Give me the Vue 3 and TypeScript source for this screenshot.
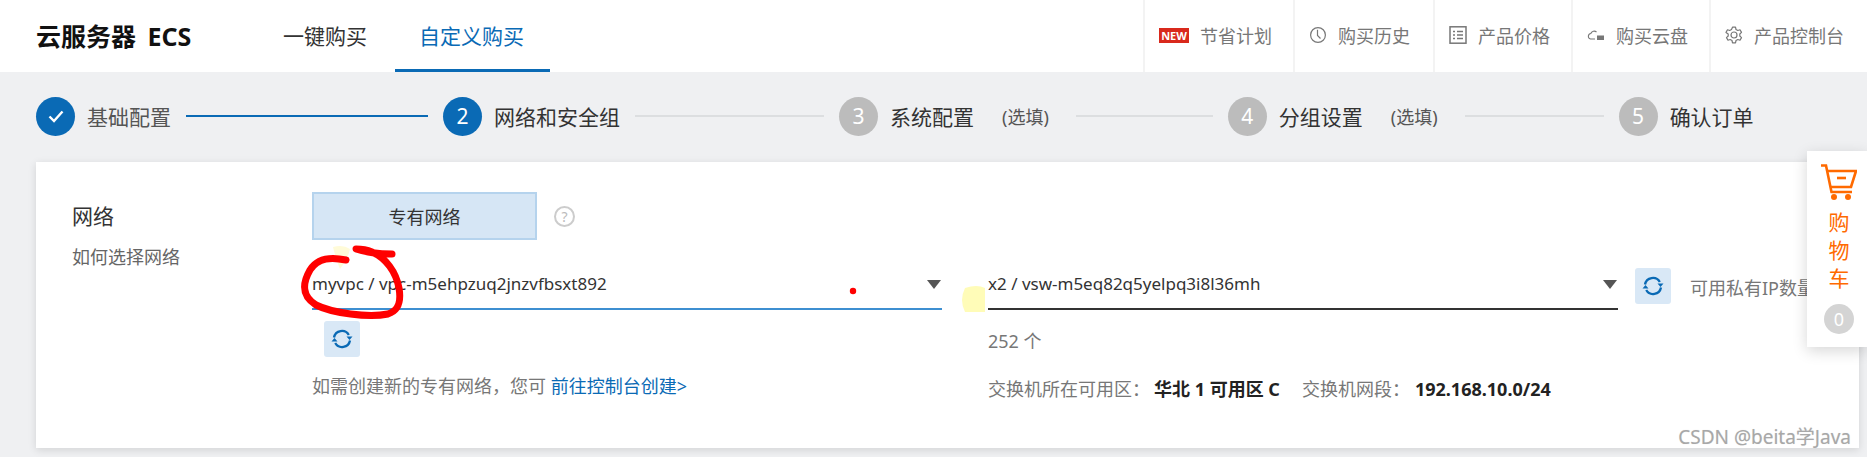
<script setup lang="ts">
const navItems = [
  { key: 'plan', text: '节省计划', width: 150 },
  { key: 'history', text: '购买历史', width: 140 },
  { key: 'price', text: '产品价格', width: 138 },
  { key: 'disk', text: '购买云盘', width: 138 },
  { key: 'console', text: '产品控制台', width: 158 },
]

const steps = [
  { no: 2, label: '网络和安全组', state: 'active', optional: false, line: 189 },
  { no: 3, label: '系统配置', state: 'todo', optional: true, line: 137 },
  { no: 4, label: '分组设置', state: 'todo', optional: true, line: 139 },
  { no: 5, label: '确认订单', state: 'todo', optional: false, line: 0 },
]
</script>

<template>
  <div class="page">
    <header class="topbar">
      <div class="logo">云服务器 ECS</div>
      <nav class="tabs">
        <a class="tab">一键购买</a>
        <a class="tab active">自定义购买</a>
      </nav>
      <div class="links">
        <div v-for="item in navItems" :key="item.key" class="link" :style="{ width: item.width + 'px' }">
          <span v-if="item.key === 'plan'" class="new-tag">NEW</span>
          <svg v-else-if="item.key === 'history'" class="link-icon" viewBox="0 0 18 18" fill="none" stroke="#777" stroke-width="1.2">
            <circle cx="9" cy="9" r="7.4" />
            <path d="M8.5 3.800V9.500L11.500 12.500" />
          </svg>
          <svg v-else-if="item.key === 'price'" class="link-icon" viewBox="0 0 18 18" fill="none" stroke="#777" stroke-width="1.5">
            <rect x="1" y="0.800" width="16" height="16.400" />
            <path d="M4 5.500h2M8 5.500h6M4 9h2M8 9h6M4 12.500h2M8 12.500h6" />
          </svg>
          <svg v-else-if="item.key === 'disk'" class="link-icon" viewBox="0 0 18 18" fill="none" stroke="#777" stroke-width="1.100">
            <path d="M9.500 6A3.600 3.600 0 0 0 3.800 7.500 2.800 2.800 0 0 0 3.500 13H8" />
            <rect x="10" y="9.500" width="7" height="4.500" fill="#777" stroke="none" />
          </svg>
          <svg v-else class="link-icon" viewBox="0 0 18 18" fill="none" stroke="#777" stroke-width="1.200">
            <path d="M7.500 1.200h3l.5 2.300 1.800 1 2.200-.7 1.500 2.600-1.700 1.600v2l1.700 1.600-1.500 2.600-2.200-.7-1.800 1-.5 2.300h-3l-.5-2.300-1.800-1-2.200.7-1.500-2.600 1.700-1.600v-2L1 6.400l1.500-2.600 2.200.7 1.800-1z" stroke-linejoin="round" />
            <circle cx="9" cy="9" r="3" />
          </svg>
          <span>{{ item.text }}</span>
        </div>
      </div>
    </header>

    <div class="steps">
      <div class="step">
        <span class="dot done">
          <svg viewBox="0 0 16 16" width="16" height="16" fill="none" stroke="#fff" stroke-width="2.400">
            <path d="M1.500 8.500 6 13 14.500 3.500" />
          </svg>
        </span>
        <span class="step-label done-label">基础配置</span>
      </div>
      <i class="step-line blue" />
      <template v-for="step in steps" :key="step.no">
        <div class="step">
          <span class="dot" :class="step.state">{{ step.no }}</span>
          <span class="step-label">{{ step.label }}</span>
          <span v-if="step.optional" class="optional">(选填)</span>
        </div>
        <i v-if="step.line" class="step-line" :style="{ width: step.line + 'px' }" />
      </template>
    </div>

    <section class="card">
      <div class="label-col">
        <div class="label">网络</div>
        <div class="sub-label">如何选择网络</div>
      </div>
      <div class="main-col">
        <div class="type-row">
          <button class="type-btn">专有网络</button>
          <span class="help">?</span>
        </div>
        <div class="net-row">
          <div class="net-col">
            <div class="select focus">
              <span>myvpc / vpc-m5ehpzuq2jnzvfbsxt892</span>
              <i class="arrow" />
            </div>
            <button class="refresh left">
              <svg viewBox="0 0 22 22" width="22" height="22" fill="none" stroke="#0a6ab5" stroke-width="2.300">
                <path d="M3 9.500A8 8 0 0 1 17.800 7" />
                <path d="M19 12.500A8 8 0 0 1 4.200 15" />
                <path d="M15.500 8.500h6l-3 3.500zM.5 13.500h6l-3-3.500z" fill="#0a6ab5" stroke="none" />
              </svg>
            </button>
            <p class="hint">如需创建新的专有网络，您可 <a class="console-link">前往控制台创建&gt;</a></p>
          </div>
          <div class="net-col">
            <div class="switch-row">
              <div class="select">
                <span>x2 / vsw-m5eq82q5yelpq3i8l36mh</span>
                <i class="arrow" />
              </div>
              <button class="refresh">
                <svg viewBox="0 0 22 22" width="22" height="22" fill="none" stroke="#0a6ab5" stroke-width="2.300">
                  <path d="M3 9.500A8 8 0 0 1 17.800 7" />
                  <path d="M19 12.500A8 8 0 0 1 4.200 15" />
                  <path d="M15.500 8.500h6l-3 3.500zM.5 13.500h6l-3-3.500z" fill="#0a6ab5" stroke="none" />
                </svg>
              </button>
              <span class="quota">可用私有IP数量</span>
            </div>
            <div class="count">252 个</div>
            <div class="info">
              <span>交换机所在可用区：</span><b>华北 1 可用区 C</b>
              <span class="info-gap">交换机网段：</span><b class="cidr">192.168.10.0/24</b>
            </div>
          </div>
        </div>
      </div>
    </section>

    <aside class="cart">
      <svg viewBox="0 0 36 36" width="36" height="36" fill="none" stroke="#ff6a00" stroke-width="2.600">
        <path d="M0 1.500h5L10.500 28H31" />
        <path d="M6 7h29l-5 16H9.500" />
        <path d="M16 14h9" />
        <circle cx="13" cy="33" r="3" fill="#ff6a00" stroke="none" />
        <circle cx="27" cy="33" r="3" fill="#ff6a00" stroke="none" />
      </svg>
      <div class="cart-text">购<br />物<br />车</div>
      <span class="cart-count">0</span>
    </aside>

    <!-- hand drawn marks on the screenshot -->
    <svg class="marks" viewBox="0 0 1867 457" width="1867" height="457" fill="none">
      <path d="M333 247q10-3 17 2q-3 12-10 20q-4-10-7-22z" fill="#fffbd8" />
      <path d="M965 288q12-4 20 0v24h-20q-6-12 0-24z" fill="#fffcb8" />
      <circle cx="853" cy="291" r="3.200" fill="#f00" />
      <path d="M346 260C332 257 318 257 310 270C302 284 302 296 316 305C332 313 368 318 388 314C400 310 401 300 399 288C396 272 386 258 372 252C365 249 358 249 356 249C368 253 382 254 392 254" stroke="#f00" stroke-width="7" stroke-linecap="round" stroke-linejoin="round" />
    </svg>
    <div class="watermark">CSDN @beita学Java</div>
  </div>
</template>

<style scoped>
.page {
  position: relative;
  width: 1867px;
  height: 457px;
  overflow: hidden;
  background: #eff0f2;
  color: #333;
  font-family: "Noto Sans", "Noto Sans CJK SC", sans-serif;
  font-size: 18px;
}

.topbar {
  display: flex;
  align-items: stretch;
  height: 72px;
  background: #fff;
}

.logo {
  width: 247px;
  padding-left: 36px;
  box-sizing: border-box;
  font-size: 25px;
  font-weight: 700;
  line-height: 72px;
  word-spacing: 5px;
  color: #111;
}

.tabs {
  display: flex;
}

.tab {
  display: block;
  padding: 0 28px 0 36px;
  font-size: 21px;
  line-height: 72px;
  color: #333;
}

.tab.active {
  padding: 0 26px 0 24px;
  color: #0a6ab5;
  border-bottom: 3px solid #0a6ab5;
}

.links {
  display: flex;
  margin-left: auto;
}

.link {
  display: flex;
  align-items: center;
  gap: 11px;
  box-sizing: border-box;
  padding-left: 14px;
  padding-bottom: 2px;
  border-left: 2px solid #f3f3f3;
  color: #777;
}

.new-tag {
  width: 30px;
  height: 15px;
  background: #d9291c;
  color: #fff;
  font-size: 11px;
  font-weight: 700;
  line-height: 15px;
  text-align: center;
}

.link-icon {
  width: 18px;
  height: 18px;
}

.steps {
  display: flex;
  align-items: center;
  height: 88px;
  padding-left: 36px;
}

.step {
  display: flex;
  align-items: center;
  gap: 12px;
}

.dot {
  display: flex;
  align-items: center;
  justify-content: center;
  width: 39px;
  height: 39px;
  border-radius: 50%;
  color: #fff;
  font-size: 21px;
}

.dot.done,
.dot.active {
  background: #0a6ab5;
}

.dot.todo {
  background: #bcbcbc;
}

.step-label {
  font-size: 21px;
  color: #333;
}

.done-label {
  color: #555;
}

.optional {
  margin: 0 12px 0 16px;
  color: #555;
}

.step-line {
  display: block;
  width: 242px;
  height: 2px;
  margin: 0 15px;
  background: #dcdee0;
}

.step-line.blue {
  background: #0a6ab5;
}

.card {
  display: flex;
  width: 1823px;
  height: 286px;
  margin: 2px 0 0 36px;
  padding-top: 30px;
  box-sizing: border-box;
  background: #fff;
  box-shadow: 0 2px 8px rgba(0, 0, 0, 0.12);
}

.label-col {
  width: 276px;
  padding-left: 36px;
  box-sizing: border-box;
}

.label {
  margin-top: 7px;
  font-size: 21px;
  line-height: 34px;
}

.sub-label {
  margin-top: 9px;
  color: #666;
  line-height: 30px;
}

.type-row {
  display: flex;
  align-items: center;
}

.type-btn {
  width: 225px;
  height: 48px;
  padding: 0;
  border: 2px solid #b5d3ed;
  background: #d6e6f5;
  color: #333;
  font: inherit;
}

.help {
  width: 21px;
  height: 21px;
  margin-left: 17px;
  border: 2px solid #ccc;
  border-radius: 50%;
  box-sizing: border-box;
  color: #bbb;
  font-size: 14px;
  line-height: 17px;
  text-align: center;
}

.net-row {
  display: flex;
  gap: 46px;
  margin-top: 26px;
}

.net-col {
  width: 630px;
}

.switch-row {
  display: flex;
  align-items: flex-start;
  width: 900px;
}

.select {
  display: flex;
  flex: none;
  align-items: center;
  justify-content: space-between;
  width: 630px;
  height: 44px;
  padding: 0 1px 6px 0;
  box-sizing: border-box;
  border-bottom: 2px solid #333;
  color: #333;
  font-size: 17px;
  line-height: 36px;
}

.select.focus {
  border-bottom-color: #3d8fd1;
}

.arrow {
  width: 0;
  height: 0;
  border-style: solid;
  border-width: 9px 7px 0;
  border-color: #555 transparent transparent;
}

.refresh {
  display: flex;
  align-items: center;
  justify-content: center;
  flex: none;
  width: 36px;
  height: 36px;
  margin: 2px 0 0 17px;
  padding: 0;
  border: 0;
  border-radius: 3px;
  background: #d9e8f6;
}

.refresh.left {
  margin: 11px 0 0 12px;
}

.quota {
  margin: 8px 0 0 19px;
  color: #777;
}

.hint {
  margin: 15px 0 0;
  color: #777;
  line-height: 28px;
}

.console-link {
  color: #0a6ab5;
}

.count {
  margin-top: 17px;
  color: #777;
  line-height: 28px;
}

.info {
  margin-top: 20px;
  color: #777;
  line-height: 28px;
}

.info b {
  margin-left: 4px;
  color: #222;
  font-weight: 700;
}

.info b.cidr {
  margin-left: 5px;
}

.info-gap {
  margin-left: 22px;
}

.cart {
  position: absolute;
  top: 151px;
  right: 0;
  display: flex;
  flex-direction: column;
  align-items: center;
  width: 60px;
  height: 196px;
  padding: 13px 0 0 4px;
  box-sizing: border-box;
  background: #fff;
  box-shadow: 0 4px 14px rgba(0, 0, 0, 0.16);
}

.cart-text {
  margin-top: 8px;
  color: #ff6a00;
  font-size: 21px;
  line-height: 28px;
  text-align: center;
}

.cart-count {
  width: 30px;
  height: 30px;
  margin-top: 12px;
  border-radius: 50%;
  background: #d4d4d4;
  color: #fff;
  line-height: 30px;
  text-align: center;
}

.marks {
  position: absolute;
  top: 0;
  left: 0;
  pointer-events: none;
}

.watermark {
  position: absolute;
  right: 16px;
  top: 425px;
  color: #a8a8a8;
  font-size: 19px;
  line-height: 24px;
  text-shadow: 0 0 1px #ddd;
}
</style>
